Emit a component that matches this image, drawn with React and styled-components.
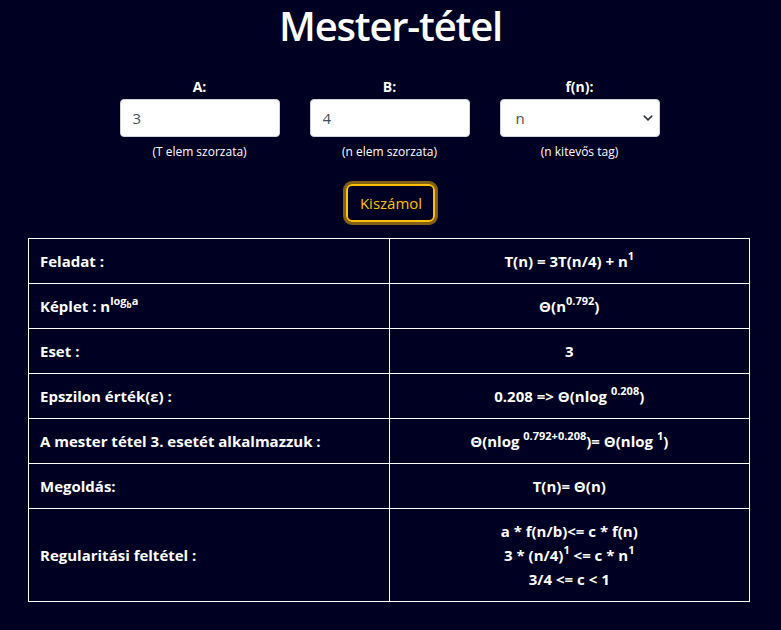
import React from "react";
import styled, { createGlobalStyle } from "styled-components";

const GlobalStyle = createGlobalStyle`
  body {
    margin: 0;
    background: #000022;
    color: #ffffff;
    font-family: "Open Sans", "Noto Sans", sans-serif;
  }
`;

const Page = styled.div`
  width: 781px;
  min-height: 630px;
  box-sizing: border-box;
  padding: 2px 32px 0 28px;
  display: flex;
  flex-direction: column;
  align-items: center;
`;

const Title = styled.h1`
  margin: 0;
  font-size: 40px;
  font-weight: 600;
  line-height: 48px;
  padding: 0 4px 0 8px;
  letter-spacing: -1.2px;
`;

const Form = styled.div`
  display: flex;
  gap: 30px;
  margin-top: 27px;
  padding-left: 2px;
`;

const Field = styled.div`
  width: 160px;
  display: flex;
  flex-direction: column;
  align-items: center;
`;

const Label = styled.label`
  font-weight: 700;
  font-size: 14px;
  line-height: 20px;
  margin-bottom: 2px;
`;

const Input = styled.input`
  width: 100%;
  height: 38px;
  box-sizing: border-box;
  border: 1px solid #ced4da;
  border-radius: 4px;
  background: #fff;
  color: #495057;
  font-family: inherit;
  font-size: 15px;
  padding: 0 12px;
  outline: none;
`;

const SelectWrap = styled.div`
  position: relative;
  width: 100%;
`;

const Select = styled.select`
  width: 100%;
  height: 38px;
  box-sizing: border-box;
  border: 1px solid #ced4da;
  border-radius: 4px;
  background: #fff;
  color: #495057;
  font-family: inherit;
  font-size: 15px;
  padding: 0 12px 0 15px;
  appearance: none;
  outline: none;
`;

const Chevron = styled.svg`
  position: absolute;
  right: 6px;
  top: 14px;
  pointer-events: none;
`;

const Hint = styled.small`
  font-size: 12px;
  line-height: 16px;
  margin-top: 7px;
`;

const Button = styled.button`
  margin-top: 24px;
  height: 38px;
  padding: 0 0 0 2px;
  width: 89px;
  margin-left: 3px;
  background: transparent;
  color: #ffc107;
  border: 2px solid #ffc107;
  border-radius: 6px;
  box-shadow: 0 0 0 3px rgba(255, 193, 7, 0.5);
  font-family: inherit;
  font-size: 15px;
`;

const Table = styled.table`
  margin-top: 16px;
  width: 722px;
  border-collapse: collapse;
  align-self: flex-start;
`;

const Cell = styled.td`
  border: 1px solid #ffffff;
  padding: 10px 11px;
  height: 24px;
  font-weight: 700;
  font-size: 15px;
  line-height: 24px;
  width: 50%;
  text-align: ${(p) => (p.$center ? "center" : "left")};

  sup {
    font-size: 11px;
    line-height: 0;
    vertical-align: 0.6em;
  }
  sub {
    font-size: 8px;
    line-height: 0;
  }
`;

const Line = styled.div`
  line-height: 24px;
`;

const rows = [
  ["Feladat :", <>T(n) = 3T(n/4) + n<sup>1</sup></>],
  [<>Képlet : n<sup>log<sub>b</sub>a</sup></>, <>Θ(n<sup>0.792</sup>)</>],
  ["Eset :", "3"],
  ["Epszilon érték(ε) :", <>0.208 =&gt; Θ(nlog <sup>0.208</sup>)</>],
  [
    "A mester tétel 3. esetét alkalmazzuk :",
    <>Θ(nlog <sup>0.792+0.208</sup>)= Θ(nlog <sup>1</sup>)</>,
  ],
  ["Megoldás:", "T(n)= Θ(n)"],
  [
    "Regularitási feltétel :",
    <>
      <Line>a * f(n/b)&lt;= c * f(n)</Line>
      <Line>3 * (n/4)<sup>1</sup> &lt;= c * n<sup>1</sup></Line>
      <Line>3/4 &lt;= c &lt; 1</Line>
    </>,
  ],
];

export default function App() {
  return (
    <>
      <GlobalStyle />
      <Page>
        <Title>Mester-tétel</Title>
        <Form>
          <Field>
            <Label>A:</Label>
            <Input defaultValue="3" />
            <Hint>(T elem szorzata)</Hint>
          </Field>
          <Field>
            <Label>B:</Label>
            <Input defaultValue="4" />
            <Hint>(n elem szorzata)</Hint>
          </Field>
          <Field>
            <Label>f(n):</Label>
            <SelectWrap>
              <Select defaultValue="n">
                <option value="n">n</option>
              </Select>
              <Chevron width="12" height="10" viewBox="0 0 16 16">
                <path
                  d="M2 5l6 6 6-6"
                  fill="none"
                  stroke="#343a40"
                  strokeWidth="2.5"
                  strokeLinecap="round"
                  strokeLinejoin="round"
                />
              </Chevron>
            </SelectWrap>
            <Hint>(n kitevős tag)</Hint>
          </Field>
        </Form>
        <Button>Kiszámol</Button>
        <Table>
          <tbody>
            {rows.map(([left, right], i) => (
              <tr key={i}>
                <Cell>{left}</Cell>
                <Cell $center>{right}</Cell>
              </tr>
            ))}
          </tbody>
        </Table>
      </Page>
    </>
  );
}
